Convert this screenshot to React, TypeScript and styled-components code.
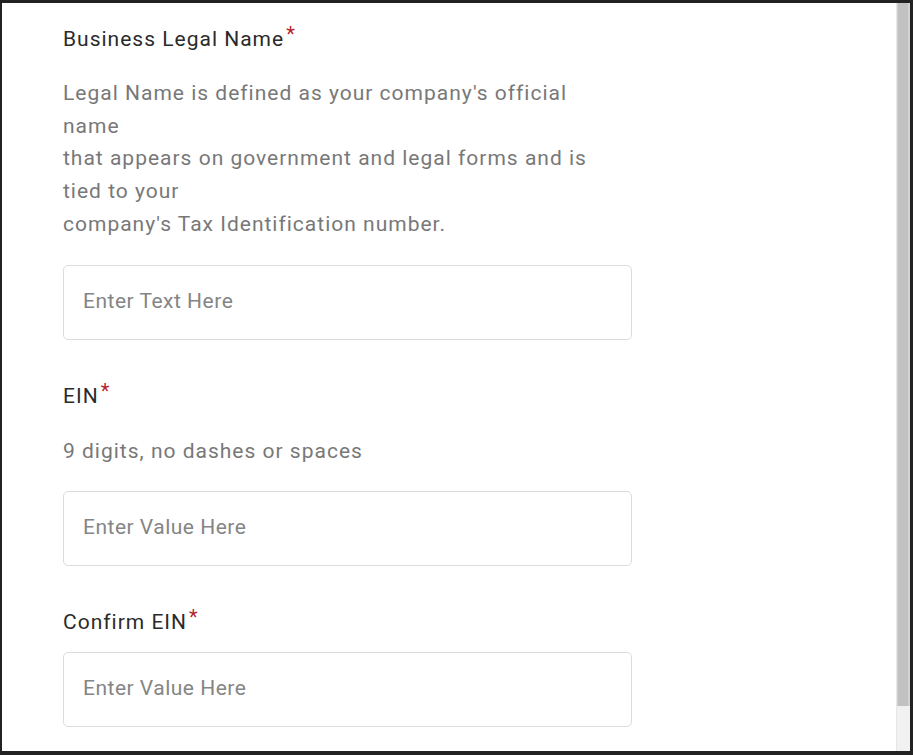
import styled, { createGlobalStyle } from 'styled-components'

const GlobalStyle = createGlobalStyle`
  html, body {
    margin: 0;
    padding: 0;
    background: #222222;
  }
  body {
    font-family: Roboto, "Liberation Sans", sans-serif;
  }
`

const StyledFrame = styled.div`
  width: 913px;
  height: 755px;
  box-sizing: border-box;
  border-style: solid;
  border-color: #222222;
  border-width: 3px 3px 4px 2px;
  background: #ffffff;
  display: flex;
`

const StyledContent = styled.div`
  flex: 1;
  height: 100%;
  overflow: hidden;
  background: #ffffff;
`

/* Scrollbar is drawn since the headless capture hides native ones */
const StyledScrollTrack = styled.div`
  width: 14px;
  height: 100%;
  background: #f1f1f1;
  border-left: 1px solid #e6e6e6;
  box-sizing: border-box;
  display: flex;
  flex-direction: column;
`

const StyledScrollThumb = styled.div<{ $ratio: number }>`
  height: ${(p) => p.$ratio * 100}%;
  background: #c1c1c1;
  border-left: 1px solid #cfcfcf;
  border-right: 2px solid #d2d2d2;
  box-sizing: border-box;
`

const StyledForm = styled.form`
  display: flex;
  flex-direction: column;
  padding: 21px 0 73px 61px;
  width: 569px;
`

const StyledField = styled.div`
  display: flex;
  flex-direction: column;
  margin-bottom: 41px;

  &:last-child {
    margin-bottom: 0;
  }
`

const StyledLabel = styled.label<{ $gap: number }>`
  font-size: 21px;
  line-height: 30px;
  color: #2b2b2b;
  letter-spacing: 1px;
  margin-bottom: ${(p) => p.$gap}px;
`

const StyledRequired = styled.span`
  color: #b5262f;
  font-size: 20px;
  margin-left: 2px;
  position: relative;
  top: -5px;
`

const StyledHelp = styled.p`
  margin: 0 0 24px 0;
  width: 545px;
  font-size: 21px;
  line-height: 32.7px;
  color: #787878;
  letter-spacing: 1px;
`

const StyledInput = styled.input`
  box-sizing: border-box;
  width: 569px;
  height: 75px;
  padding: 0 19px 3px;
  border: 1.5px solid #dcdcdc;
  border-radius: 5px;
  font-family: Roboto, "Liberation Sans", sans-serif;
  font-size: 21px;
  color: #333333;
  outline: none;

  &::placeholder {
    color: #858585;
    letter-spacing: 0.5px;
  }
`

const App: React.FC = () => {
  return (
    <>
      <GlobalStyle />
      <StyledFrame>
        <StyledContent>
          <StyledForm onSubmit={(e) => e.preventDefault()}>
            <StyledField>
              <StyledLabel $gap={23}>
                Business Legal Name<StyledRequired>*</StyledRequired>
              </StyledLabel>
              <StyledHelp>
                Legal Name is defined as your company's official name
                <br />
                that appears on government and legal forms and is tied to your
                <br />
                company's Tax Identification number.
              </StyledHelp>
              <StyledInput type="text" placeholder="Enter Text Here" />
            </StyledField>

            <StyledField>
              <StyledLabel $gap={24}>
                EIN<StyledRequired>*</StyledRequired>
              </StyledLabel>
              <StyledHelp>9 digits, no dashes or spaces</StyledHelp>
              <StyledInput type="text" placeholder="Enter Value Here" />
            </StyledField>

            <StyledField>
              <StyledLabel $gap={15}>
                Confirm EIN<StyledRequired>*</StyledRequired>
              </StyledLabel>
              <StyledInput type="text" placeholder="Enter Value Here" />
            </StyledField>
          </StyledForm>
        </StyledContent>
        <StyledScrollTrack>
          <StyledScrollThumb $ratio={0.94} />
        </StyledScrollTrack>
      </StyledFrame>
    </>
  )
}

export default App
